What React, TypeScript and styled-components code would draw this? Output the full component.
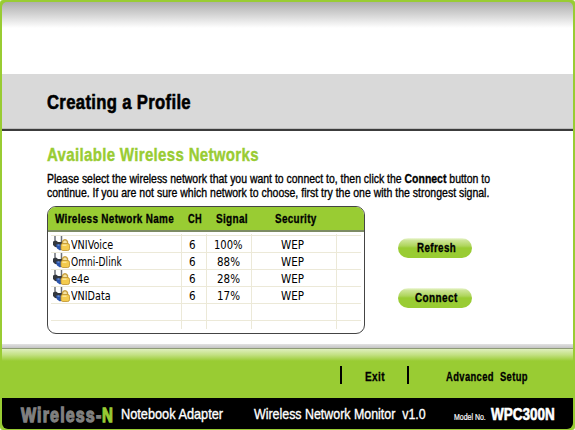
import React, { useLayoutEffect, useRef, useState } from "react";
import styled, { createGlobalStyle, css } from "styled-components";

const green = "#99cc33";

const GlobalStyle = createGlobalStyle`
  html, body { margin: 0; padding: 0; background: #fff; }
  * { box-sizing: border-box; }
`;

/* Text squeezed horizontally to a fixed measure, for the condensed face. */
const Slot = styled.span<{ $width: number; $gap?: number }>`
  display: block;
  flex: none;
  width: ${(p) => p.$width}px;
  margin-left: ${(p) => p.$gap ?? 0}px;
  white-space: pre;
`;
const Squeezed = styled.span`
  display: inline-block;
  transform-origin: 0 50%;
`;

function Fit({ width, gap, children }: { width: number; gap?: number; children: React.ReactNode }) {
  const ref = useRef<HTMLSpanElement>(null);
  const [scale, setScale] = useState(1);
  useLayoutEffect(() => {
    if (ref.current) setScale(width / ref.current.offsetWidth);
  }, [width]);
  return (
    <Slot $width={width} $gap={gap}>
      <Squeezed ref={ref} style={{ transform: `scaleX(${scale})` }}>{children}</Squeezed>
    </Slot>
  );
}

const condensed = css`
  font-family: "Liberation Sans Narrow", "Liberation Sans", sans-serif;
`;

const Window = styled.div`
  ${condensed}
  width: 575px;
  height: 430px;
  display: flex;
  flex-direction: column;
  overflow: hidden;
  color: #000;
  background: ${green};
  padding: 2px 2px 1px 2px;
  border-radius: 3px;
`;

const TopShade = styled.header`
  height: 72px;
  flex: none;
  border-radius: 5px 5px 0 0;
  background: linear-gradient(#aeaeae, #d2d2d2 12px, #fff 26px);
`;

const TitleBand = styled.h1`
  margin: 0;
  height: 57px;
  flex: none;
  padding: 14px 0 0 45px;
  background: #d9d9d9;
  border-bottom: 2px solid #3c3c3c;
  box-shadow: inset 0 -1px #bcbcbc;
  font-size: 20.5px;
  line-height: 28px;
  font-weight: 700;
  letter-spacing: 0.4px;
  -webkit-text-stroke: 0.6px #000;
`;

const Main = styled.main`
  height: 217px;
  flex: none;
  padding: 15px 0 0 45px;
  background: linear-gradient(#fff 213px, #e2e2e2 213px, #c4c4c4 217px);
`;

const Heading = styled.h2`
  margin: 0;
  height: 26px;
  color: ${green};
  font-size: 18.5px;
  line-height: 18px;
  font-weight: 700;
  letter-spacing: 0.4px;
  -webkit-text-stroke: 0.4px ${green};
`;

const Intro = styled.p`
  margin: 0 0 6px;
  font-size: 12.8px;
  line-height: 14px;
  -webkit-text-stroke: 0.35px #000;
`;

const Columns = styled.div`
  display: flex;
  align-items: flex-start;
`;

const Panel = styled.section`
  width: 318px;
  height: 128px;
  border: 1px solid #444;
  border-radius: 9px;
  overflow: hidden;
  background: #fff;
`;

const PanelHead = styled.div`
  height: 25px;
  display: flex;
  padding-top: 4px;
  background: ${green};
  border-bottom: 2px solid #7d8b64;
  font-size: 12.5px;
  line-height: 16px;
  font-weight: 700;
  letter-spacing: 0.4px;
  -webkit-text-stroke: 0.3px #000;
`;

const Sheet = styled.div`
  padding: 2px 3px 0;
  font-family: "DejaVu Sans Condensed", "DejaVu Sans", sans-serif;
  font-size: 11.5px;
  line-height: 19px;
`;

const Row = styled.div<{ $height: number; $open?: boolean }>`
  display: grid;
  grid-template-columns: 131px 25px 45px 85px 24px;
  height: ${(p) => p.$height}px;
  border-top: ${(p) => (p.$open ? "0" : "1px solid #ece9d8")};
`;

const Cell = styled.div`
  display: flex;
  border-right: 1px solid #ece9d8;
  &:last-child { border-right: 0; }
`;

const IconBox = styled.svg`
  flex: none;
  width: 17px;
  height: 16px;
  margin-left: 2px;
`;

const Actions = styled.div`
  margin: 32px 0 0 33px;
  display: flex;
  flex-direction: column;
  gap: 30px;
`;

const Pill = styled.button`
  width: 74px;
  height: 20px;
  padding: 0;
  border: 0;
  border-radius: 10px;
  display: flex;
  background: linear-gradient(#f2f9e2 0, #cfe69b 2px, #aed55c 8px, ${green} 10px);
  font-family: inherit;
  font-size: 12.5px;
  line-height: 21px;
  font-weight: 700;
  letter-spacing: 0.5px;
  color: #000;
  text-align: left;
  -webkit-text-stroke: 0.3px #000;
`;

const MenuBar = styled.nav`
  height: 50px;
  flex: none;
  display: flex;
  align-items: flex-start;
  padding: 21px 0 0 338px;
  border-top: 1px solid #8f9b78;
  background: linear-gradient(#dfefbe, #c2e081 6px, ${green} 12px);
  font-size: 12.5px;
  line-height: 14px;
  font-weight: 700;
  letter-spacing: 0.5px;
  -webkit-text-stroke: 0.3px #000;
`;

const Divider = styled.i<{ $gap?: number }>`
  width: 2px;
  height: 18px;
  margin: -4px 0 0 ${(p) => p.$gap ?? 0}px;
  background: #000;
`;

const Footer = styled.footer`
  height: 31px;
  flex: none;
  display: flex;
  border-radius: 0 0 6px 6px;
  background: #000;
  color: #fff;
  font-size: 14.5px;
  line-height: 33px;
  -webkit-text-stroke: 0.35px #fff;
`;

const Brand = styled.span`
  display: flex;
  color: #808080;
  font-size: 20.5px;
  line-height: 33px;
  font-weight: 700;
  letter-spacing: 1.5px;
  -webkit-text-stroke: 1.3px currentColor;
`;
const BrandN = styled.span`
  display: flex;
  color: ${green};
  letter-spacing: 0;
`;
const Small = styled.span`
  display: flex;
  font-size: 8.5px;
  line-height: 38px;
  -webkit-text-stroke: 0.2px #fff;
`;
const Model = styled.span`
  display: flex;
  font-size: 16px;
  line-height: 33px;
  font-weight: 700;
  -webkit-text-stroke: 0.6px #fff;
`;

const NetworkIcon = () => (
  <IconBox viewBox="0 0 17 16">
    <path d="M2 0v6M8.500 0v6" stroke="#6d7178" strokeWidth="1.500" />
    <path d="M0 5.500l3-1 2 1.500h3l3-1.500 1 3.500-2 4H7l-5-1-2-2z" fill="#33373e" />
    <path d="M3 8.500h6l.5 4.500L7 14.500l-3-2z" fill="#2b55ad" />
    <path d="M4.500 9h2" stroke="#8ab0ee" />
    <path d="M9.500 8V5.500Q12 2 14.500 5.500V8" fill="#f5e3a4" stroke="#c8a040" strokeWidth="1.300" />
    <rect x="8" y="7.500" width="8.500" height="7" rx="1.800" fill="#f4cb4e" stroke="#bd912c" strokeWidth=".8" />
    <path d="M9.500 9.200h4" stroke="#fff2b8" />
  </IconBox>
);

const networks = [
  { name: "VNIVoice", width: 42, signal: "100%", sw: 29 },
  { name: "Omni-Dlink", width: 51, signal: "88%", sw: 23 },
  { name: "e4e", width: 18, signal: "28%", sw: 23 },
  { name: "VNIData", width: 40, signal: "17%", sw: 23 },
];

const EmptyCells = () => (<><Cell /><Cell /><Cell /><Cell /><Cell /></>);

export default function App() {
  return (
    <>
      <GlobalStyle />
      <Window>
        <TopShade />
        <TitleBand><Fit width={144}>Creating a Profile</Fit></TitleBand>
        <Main>
          <Heading><Fit width={212}>Available Wireless Networks</Fit></Heading>
          <Intro>
            <Fit width={443}>Please select the wireless network that you want to connect to, then click the <b>Connect</b> button to</Fit>
            <Fit width={442}>continue. If you are not sure which network to choose, first try the one with the strongest signal.</Fit>
          </Intro>
          <Columns>
            <Panel>
              <PanelHead>
                <Fit gap={7} width={119}>Wireless Network Name</Fit>
                <Fit gap={14} width={14}>CH</Fit>
                <Fit gap={14} width={32}>Signal</Fit>
                <Fit gap={27} width={42}>Security</Fit>
              </PanelHead>
              <Sheet>
                <Row $height={1} $open><EmptyCells /></Row>
                {networks.map((n) => (
                  <Row key={n.name} $height={17}>
                    <Cell><NetworkIcon /><Fit gap={0.5} width={n.width}>{n.name}</Fit></Cell>
                    <Cell><Fit gap={7} width={7}>6</Fit></Cell>
                    <Cell><Fit gap={(43 - n.sw) / 2} width={n.sw}>{n.signal}</Fit></Cell>
                    <Cell><Fit gap={29} width={23}>WEP</Fit></Cell>
                    <Cell />
                  </Row>
                ))}
                <Row $height={17}><EmptyCells /></Row>
                <Row $height={9}><EmptyCells /></Row>
              </Sheet>
            </Panel>
            <Actions>
              <Pill><Fit gap={19} width={39}>Refresh</Fit></Pill>
              <Pill><Fit gap={17} width={43}>Connect</Fit></Pill>
            </Actions>
          </Columns>
        </Main>
        <MenuBar>
          <Divider />
          <Fit gap={23} width={20}>Exit</Fit>
          <Divider $gap={22} />
          <Fit gap={37} width={82}>Advanced  Setup</Fit>
        </MenuBar>
        <Footer>
          <Brand>
            <Fit gap={19} width={81}>Wireless-</Fit>
            <BrandN><Fit width={11}>N</Fit></BrandN>
          </Brand>
          <Fit gap={8} width={102}>Notebook Adapter</Fit>
          <Fit gap={31} width={172}>Wireless Network Monitor  v1.0</Fit>
          <Small><Fit gap={28} width={32}>Model No.</Fit></Small>
          <Model><Fit gap={5} width={64}>WPC300N</Fit></Model>
        </Footer>
      </Window>
    </>
  );
}
